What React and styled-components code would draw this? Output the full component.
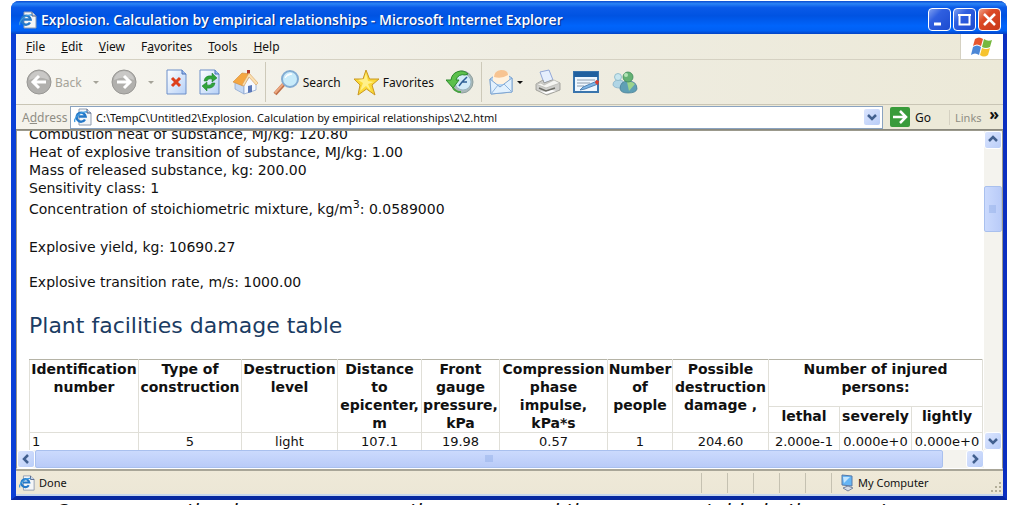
import React from 'react';
import styled, { createGlobalStyle } from 'styled-components';

const GlobalStyle = createGlobalStyle`
	* {
		box-sizing: border-box;
	}

	body {
		margin: 0;
		background: #fff;
		color: #111;
		font-family: "Noto Sans", "Open Sans", sans-serif;
		font-size: 12px;
	}

	button, input {
		font: inherit;
		color: inherit;
	}

	button {
		padding: 0;
		border: 0;
		background: none;
	}
`;

const Page = styled.div`
	display: flex;
	flex-direction: column;
	height: 100vh;
	overflow: hidden;
	padding: 1px 5px 0 11px;
`;

const Window = styled.section`
	display: flex;
	flex-direction: column;
	flex: 1;
	min-height: 0;
	border: solid #0a3fd6;
	border-width: 0 4px 4px 5px;
	border-color: #0a3fd6 #0b2fc0 #0728a0 #0a3fd6;
	border-radius: 8px 8px 0 0;
	background: #ece9d8;
`;

const TitleBar = styled.header`
	display: flex;
	align-items: center;
	flex: none;
	gap: 4px;
	height: 33px;
	margin: 0 -4px 0 -5px;
	padding: 4px 6px 0 8px;
	border-radius: 8px 8px 0 0;
	background: linear-gradient(#0a4bd0, #2a83f5 8%, #0a5ae8 20%, #0053e2 45%, #0064fb 75%, #0060f4 90%, #0443c4);
`;

const Title = styled.h1`
	flex: 1;
	margin: 0;
	overflow: hidden;
	color: #fff;
	font-family: "Open Sans", "Noto Sans", sans-serif;
	font-size: 14px;
	font-weight: 600;
	line-height: 20px;
	text-shadow: 1px 1px 1px #0a2f8c;
	white-space: nowrap;
`;

const WindowButtons = styled.div`
	display: flex;
	gap: 2px;
`;

const WindowButton = styled.button`
	width: 23px;
	height: 23px;
	border: 1px solid #fff;
	border-radius: 4px;
	background: ${({ $close }) => $close
		? 'linear-gradient(135deg, #f0a088, #dc4a25 35%, #c8381a)'
		: 'linear-gradient(135deg, #7f9ff0, #2f5fe0 35%, #1c4bd0)'};

	svg {
		display: block;
	}
`;

const MenuBar = styled.nav`
	display: flex;
	flex: none;
	height: 26px;
	border-bottom: 1px solid #d5d1c2;
	background: linear-gradient(90deg, #f8f7f3, #efede2 50%, #ece9d8);
`;

const MenuItems = styled.div`
	display: flex;
	align-items: center;
	flex: 1;
	gap: 16px;
	padding-left: 10px;
`;

const FlagBox = styled.div`
	display: flex;
	align-items: center;
	justify-content: center;
	width: 43px;
	border-left: 1px solid #d5d1c2;
	background: #fff;
`;

const ToolBar = styled.div`
	display: flex;
	align-items: center;
	flex: none;
	height: 45px;
	padding-left: 10px;
	border-bottom: 1px solid #c9c5b5;
	background: linear-gradient(90deg, #f7f6f1, #efede2 50%, #ece9d8);
`;

const ToolGroup = styled.div`
	display: flex;
	align-items: center;
	gap: 12px;
	height: 40px;
	margin-right: 7px;
	padding-right: 7px;
	border-right: 1px solid ${({ $last }) => $last ? 'transparent' : '#cdc9b9'};
`;

const ToolButton = styled.button`
	display: flex;
	align-items: center;
	gap: 3px;
	color: ${({ disabled }) => disabled ? '#a5a399' : '#111'};

	svg {
		flex: none;
	}
`;

const Caret = styled.span`
	margin-left: ${({ $gap }) => $gap}px;
	border: 3px solid transparent;
	border-top-color: currentColor;
	border-bottom: 0;
`;

const AddressBar = styled.form`
	display: flex;
	align-items: center;
	flex: none;
	height: 25px;
	padding-left: 6px;
	border-bottom: 1px solid #8b897e;
	background: linear-gradient(90deg, #f5f3ec, #ece9d8 50%);
`;

const AddressLabel = styled.label`
	width: 48px;
	color: #8f8d84;
`;

const AddressBox = styled.div`
	display: flex;
	align-items: center;
	flex: 1;
	gap: 4px;
	height: 23px;
	padding: 0 1px 0 3px;
	border: 1px solid #8aa3c0;
	background: #fff;
`;

const AddressInput = styled.input`
	flex: 1;
	min-width: 0;
	padding: 0;
	border: 0;
	outline: 0;
	background: transparent;
	font-size: 11px;
`;

const GoButton = styled.button`
	display: flex;
	align-items: center;
	gap: 5px;
	width: 66px;
	padding-left: 7px;
`;

const Links = styled.div`
	display: flex;
	justify-content: space-between;
	width: 54px;
	padding: 0 4px 0 5px;
	border-left: 1px solid #d5d1c2;
	color: #8f8d84;
	font-size: 11px;

	button {
		align-self: flex-start;
		color: #111;
		font-size: 16px;
		font-weight: 700;
		line-height: 8px;
	}
`;

const Viewport = styled.div`
	display: grid;
	grid-template-columns: 1fr 18px;
	grid-template-rows: 1fr 18px;
	flex: 1;
	min-height: 0;
	border: 1px solid #9b998c;
	border-bottom-color: #fff;
	background: #fff;
`;

const Document = styled.main`
	min-width: 0;
	overflow: hidden;
	padding-left: 12px;
	font-family: Verdana, "DejaVu Sans", sans-serif;
	font-size: 14px;
	line-height: 18px;
`;

const Facts = styled.div`
	margin-top: -6px;

	p {
		margin: 0;
	}

	p:nth-child(5) {
		padding: 3px 0;
	}

	p:nth-child(n + 6) {
		margin-top: 17px;
	}

	sup {
		font-size: 11px;
		line-height: 0;
	}
`;

const Heading = styled.h2`
	margin: 20px 0 18px;
	color: #1b3c63;
	font-size: 22px;
	font-weight: 400;
	line-height: 30px;
`;

const DamageTable = styled.table`
	width: 953px;
	table-layout: fixed;
	border-collapse: collapse;
	border: 1px solid #b5b3a6;
	text-align: center;

	th, td {
		height: 26px;
		padding: 0;
		border: 1px solid #e0dfd8;
		vertical-align: top;
		white-space: nowrap;
	}

	thead tr:first-child th {
		border-top-color: #b5b3a6;
	}

	th {
		white-space: pre-line;
	}

	th[colspan] {
		height: 47px;
	}

	td {
		font-size: 13px;
	}

	td:first-child {
		padding-left: 2px;
		text-align: left;
	}
`;

const ScrollBar = styled.div`
	display: flex;
	flex-direction: ${({ $vertical }) => $vertical ? 'column' : 'row'};
	background: #f4f3ee;
`;

const ScrollButton = styled.button`
	display: flex;
	align-items: center;
	justify-content: center;
	flex: none;
	width: 18px;
	height: 18px;
	border: 1px solid #fff;
	border-radius: 3px;
	background: linear-gradient(135deg, #dbe5fe, #b9cdf8);
`;

const Track = styled.div`
	display: flex;
	flex: 1;
	flex-direction: ${({ $vertical }) => $vertical ? 'column' : 'row'};
	padding: ${({ $vertical }) => $vertical ? '37px 0 0' : '0 23px 0 0'};
`;

const Thumb = styled.div`
	display: flex;
	align-items: center;
	justify-content: center;
	flex: ${({ $vertical }) => $vertical ? '0 0 46px' : '1'};
	border: 1px solid #a9c0ee;
	border-radius: 2px;
	background: ${({ $vertical }) => $vertical
		? 'linear-gradient(90deg, #cbdafd, #b9cbf8)'
		: 'linear-gradient(#cbdafd, #b9cbf8)'};
`;

const StatusBar = styled.footer`
	display: flex;
	align-items: center;
	flex: none;
	height: 27px;
	border-top: 2px solid #a9a698;
	border-bottom: 2px solid #c5d6ee;
	background: linear-gradient(#efe9d8, #ece7d6);
`;

const StatusText = styled.div`
	display: flex;
	align-items: center;
	flex: 1;
	gap: 4px;
	padding-left: 3px;
	font-size: 11px;
`;

const StatusCell = styled.div`
	display: flex;
	align-items: center;
	gap: 4px;
	width: ${({ $wide }) => $wide ? '172px' : '26px'};
	height: 20px;
	padding-left: ${({ $wide }) => $wide ? '8px' : '0'};
	border-left: 1px solid #c5c1b1;
	font-size: 11px;
`;

const Grip = styled.svg`
	align-self: flex-end;
	margin-left: auto;
`;

const Caption = styled.p`
	flex: none;
	height: 5px;
	margin: 0;
	padding-left: 44px;
	overflow: hidden;
	color: #111;
	font-family: Verdana, "DejaVu Sans", sans-serif;
	font-size: 20px;
	font-style: italic;
	line-height: 22px;
	white-space: nowrap;
`;

const menus = [
	['', 'F', 'ile'],
	['', 'E', 'dit'],
	['', 'V', 'iew'],
	['F', 'a', 'vorites'],
	['', 'T', 'ools'],
	['', 'H', 'elp']
];

const columns = [109, 103, 96, 84, 78, 108, 65, 96, 71, 72, 71];

const headers = [
	'Identification\nnumber',
	'Type of\nconstruction',
	'Destruction\nlevel',
	'Distance\nto\nepicenter,\nm',
	'Front\ngauge\npressure,\nkPa',
	'Compression\nphase\nimpulse,\nkPa*s',
	'Number\nof\npeople',
	'Possible\ndestruction\ndamage ,'
];

const row = ['1', '5', 'light', '107.1', '19.98', '0.57', '1', '204.60', '2.000e-1', '0.000e+0', '0.000e+0'];

function PageIcon({ size = 18 }) {
	return (
		<svg width={size} height={size} viewBox="0 0 18 18" aria-hidden="true">
			<path d="M5 1h8l4 4v12H5z" fill="#f4f6f8" stroke="#8f9cb0" />
			<path d="M13 1v4h4" fill="#cfdcf0" stroke="#4a5a80" />
			<path d="M11 11.500a4.500 4.500 0 1 1 .6-3H4.500" fill="none" stroke="#2478c8" strokeWidth="2.400" />
			<path d="M1 14C-1 10 7 3 13 4" fill="none" stroke="#3d9ae0" strokeWidth="1.300" />
		</svg>
	);
}

function ArrowIcon({ flip }) {
	return (
		<svg width="26" height="26" viewBox="0 0 26 26" aria-hidden="true">
			<circle cx="13" cy="13" r="12" fill="#b1b0ad" stroke="#989794" />
			<path d="M3 11a10 9 0 0 1 20 0q-10-5-20 0" fill="#c9c8c6" />
			<path
				d={flip ? 'M6 13h13M13 7l6 6-6 6' : 'M20 13H7M13 7l-6 6 6 6'}
				fill="none"
				stroke="#fff"
				strokeWidth="3"
			/>
		</svg>
	);
}

function SheetIcon({ children }) {
	return (
		<svg width="21" height="26" viewBox="0 0 21 26" aria-hidden="true">
			<defs>
				<linearGradient id="sheet" x2="1" y2="1">
					<stop stopColor="#fff" />
					<stop offset="1" stopColor="#b5d0f7" />
				</linearGradient>
			</defs>
			<path d="M1 1h15l4 4v20H1z" fill="url(#sheet)" stroke="#6d8fc9" />
			<path d="M16 1v4h4" fill="#9dbcf0" stroke="#4a72b8" />
			{children}
		</svg>
	);
}

function HomeIcon() {
	return (
		<svg width="26" height="26" viewBox="0 0 26 26" aria-hidden="true">
			<path d="M15 1h3v7h-3z" fill="#b23a2a" />
			<path d="M3 13l9 4v8l-9-5z" fill="#c5d8f2" stroke="#8fa8d0" strokeWidth=".8" />
			<path d="M12 16l6-9 6 7v7l-12 4z" fill="#f6f9ff" stroke="#8fa8d0" strokeWidth=".8" />
			<path d="M16 17l4-1v7l-4 1z" fill="#5a78b8" />
			<path d="M1 13L10 4l8 1-7 12z" fill="#f5a742" stroke="#d08a38" strokeWidth=".6" />
			<path d="M17 4l9 10-2 2-7-8-5 9-2-1z" fill="#fbe0b0" stroke="#d8a060" strokeWidth=".6" />
		</svg>
	);
}

function SearchIcon() {
	return (
		<svg width="27" height="27" viewBox="0 0 27 27" aria-hidden="true">
			<path d="M2 25l9-10" stroke="#bf6f48" strokeWidth="4" />
			<path d="M2 24l9-10" stroke="#eda880" strokeWidth="2" />
			<circle cx="17" cy="10" r="8" fill="#c8ebfa" stroke="#83acd2" strokeWidth="2" />
			<path d="M12 9q2-5 7-4-5 1-7 4" fill="#fff" stroke="#fff" />
		</svg>
	);
}

function StarIcon() {
	return (
		<svg width="27" height="27" viewBox="0 0 27 27" aria-hidden="true">
			<path d="M13 1l3.500 9H26l-7 6 3 10-8.500-6L5 26l2-10-6-6h9z" fill="#fbd936" stroke="#ca9822" />
			<path d="M13 4l2 8 6 1-6 2 3 7-5-5-6 5 3-8-5-3 6-1z" fill="#fff08a" />
		</svg>
	);
}

function HistoryIcon() {
	return (
		<svg width="28" height="26" viewBox="0 0 28 26" aria-hidden="true">
			<circle cx="16" cy="13" r="11" fill="#a9b8b8" stroke="#8fa09f" />
			<circle cx="17" cy="13" r="8" fill="#d3ebf8" stroke="#9ab5c0" />
			<path d="M13 17l3-4 5-5M16 13h5" fill="none" stroke="#2f6096" strokeWidth="1.500" />
			<path d="M22 5A10 10 0 0 0 5 11H0l7 8 6-8h-3a7 7 0 0 1 9-5z" fill="#5cc04c" stroke="#2b8a2c" />
			<path d="M7 19a10 10 0 0 0 8 4" fill="none" stroke="#46a43e" strokeWidth="2" />
		</svg>
	);
}

function MailIcon() {
	return (
		<svg width="24" height="26" viewBox="0 0 24 26" aria-hidden="true">
			<path d="M1 10l11-8 11 7v14L2 25z" fill="#b5d6f5" stroke="#7fa6d2" />
			<path d="M4 5q9-6 16 0v10H4z" fill="#fff2df" />
			<path d="M5 8q0-6 7-7 7 0 7 5-6 4-14 2" fill="#f7c492" />
			<path d="M1 10l10 8 12-9v14L2 25z" fill="#e2f1fe" stroke="#7fa6d2" />
			<path d="M2 25l7-9M23 23l-8-8" stroke="#8fb5de" />
		</svg>
	);
}

function PrintIcon() {
	return (
		<svg width="26" height="27" viewBox="0 0 26 27" aria-hidden="true">
			<path d="M5 3l9-2 4 10-9 3z" fill="#e6effd" stroke="#93a8d8" />
			<path d="M1 15l7-4 1 3 8-3 8 3v7l-13 5-11-5z" fill="#cfcfcc" stroke="#96968f" strokeWidth=".8" />
			<path d="M1 15l10 4 14-5-6-3-10 5-3-2z" fill="#f5f5f2" stroke="#b5b5af" strokeWidth=".7" />
			<path d="M4 19l7 3 9-3" fill="none" stroke="#6c6c66" strokeWidth="1.500" />
			<path d="M5 22l6 3 10-3-4-1-6 2z" fill="#fff" />
		</svg>
	);
}

function EditIcon() {
	return (
		<svg width="27" height="22" viewBox="0 0 27 22" aria-hidden="true">
			<path d="M1 1h24v20H1z" fill="#eef7ff" stroke="#3a75ad" strokeWidth="2" />
			<path d="M1 1h24v5H1z" fill="#20609f" />
			<path d="M4 9h18M4 12h13M4 15h7" stroke="#8c9cad" />
			<path d="M24 10L10 16l-3 3 5-1 13-5z" fill="#7db5e6" stroke="#3a6fa5" strokeWidth=".8" />
			<path d="M23 9l3 1-1 4-3-2z" fill="#dd3c2c" />
		</svg>
	);
}

function PeopleIcon() {
	return (
		<svg width="26" height="23" viewBox="0 0 26 23" aria-hidden="true">
			<path d="M1 14q0-5 6-5 5 0 6 5 0 3-5 3-6 0-7-3" fill="#b0d5e5" stroke="#85b0c8" strokeWidth=".8" />
			<circle cx="6" cy="6" r="3.500" fill="#c8e6ee" stroke="#85b5c5" strokeWidth=".8" />
			<path d="M8 18q0-8 8-8 9 0 9 8-1 4-9 4-7 0-8-4" fill="#5f9fb5" stroke="#4a8095" strokeWidth=".8" />
			<path d="M15 11l2 9 6-7q-3-3-8-2" fill="#9bd38c" />
			<circle cx="16" cy="6" r="5" fill="#65b274" stroke="#3f8a5a" strokeWidth=".8" />
			<circle cx="14" cy="4" r="2" fill="#b3e3b5" />
		</svg>
	);
}

function FlagIcon() {
	return (
		<svg width="22" height="20" viewBox="0 0 22 20" aria-hidden="true">
			<path d="M4 2q4-3 8 0l-2 7q-4-3-8 0z" fill="#e8562c" />
			<path d="M13 2q4 3 8 1l-2 7q-4 2-8 0z" fill="#76b83e" />
			<path d="M2 10q4-3 8 0l-2 8q-4-3-8 0z" fill="#4c87d6" />
			<path d="M11 11q4 2 8 0l-2 7q-4 3-8 0z" fill="#f6c32f" />
		</svg>
	);
}

function ComputerIcon() {
	return (
		<svg width="14" height="18" viewBox="0 0 14 18" aria-hidden="true">
			<path d="M2 1l10 1v10l-10-1z" fill="#65b5f5" stroke="#5778a7" />
			<path d="M3 3l7 0-6 6z" fill="#c3e5ff" />
			<path d="M3 14l5-2 5 2-5 3z" fill="#d5dce6" stroke="#7886a0" />
		</svg>
	);
}

const chevrons = {
	up: 'M1 6l4-4 4 4',
	down: 'M1 3l4 4 4-4',
	left: 'M7 1L3 5l4 4',
	right: 'M3 1l4 4-4 4'
};

function ScrollArrow({ direction, label }) {
	return (
		<ScrollButton type="button" aria-label={label}>
			<svg width="10" height="10" viewBox="0 0 10 10" aria-hidden="true">
				<path d={chevrons[direction]} fill="none" stroke="#42608f" strokeWidth="2.500" />
			</svg>
		</ScrollButton>
	);
}

function Toolbar() {
	return (
		<ToolBar>
			<ToolGroup>
				<ToolButton disabled><ArrowIcon />Back<Caret $gap={8} /></ToolButton>
				<ToolButton disabled aria-label="Forward"><ArrowIcon flip /><Caret $gap={8} /></ToolButton>
				<ToolButton aria-label="Stop">
					<SheetIcon><path d="M6 9l8 8M14 9l-8 8" stroke="#dd3f1c" strokeWidth="3" /></SheetIcon>
				</ToolButton>
				<ToolButton aria-label="Refresh">
					<SheetIcon>
						<path d="M5 12q1-6 8-5V4l5 5-5 4v-3q-4-1-5 2z" fill="#30a43b" stroke="#167b25" strokeWidth=".5" />
						<path d="M16 14q-1 6-8 5v3l-5-5 5-4v3q4 1 5-2z" fill="#30a43b" stroke="#167b25" strokeWidth=".5" />
					</SheetIcon>
				</ToolButton>
				<ToolButton aria-label="Home"><HomeIcon /></ToolButton>
			</ToolGroup>
			<ToolGroup>
				<ToolButton><SearchIcon />Search</ToolButton>
				<ToolButton><StarIcon />Favorites</ToolButton>
				<ToolButton aria-label="History"><HistoryIcon /></ToolButton>
			</ToolGroup>
			<ToolGroup $last>
				<ToolButton aria-label="Mail"><MailIcon /><Caret $gap={1} /></ToolButton>
				<ToolButton aria-label="Print"><PrintIcon /></ToolButton>
				<ToolButton aria-label="Edit"><EditIcon /></ToolButton>
				<ToolButton aria-label="Messenger"><PeopleIcon /></ToolButton>
			</ToolGroup>
		</ToolBar>
	);
}

function DamageReport() {
	return (
		<Document>
			<Facts>
				<p>Combustion heat of substance, MJ/kg: 120.80</p>
				<p>Heat of explosive transition of substance, MJ/kg: 1.00</p>
				<p>Mass of released substance, kg: 200.00</p>
				<p>Sensitivity class: 1</p>
				<p>Concentration of stoichiometric mixture, kg/m<sup>3</sup>: 0.0589000</p>
				<p>Explosive yield, kg: 10690.27</p>
				<p>Explosive transition rate, m/s: 1000.00</p>
			</Facts>
			<Heading>Plant facilities damage table</Heading>
			<DamageTable>
				<colgroup>
					{columns.map((width, i) => <col key={i} width={width} />)}
				</colgroup>
				<thead>
					<tr>
						{headers.map(text => <th key={text} rowSpan={2}>{text}</th>)}
						<th colSpan={3}>{'Number of injured\npersons:'}</th>
					</tr>
					<tr>
						<th>lethal</th>
						<th>severely</th>
						<th>lightly</th>
					</tr>
				</thead>
				<tbody>
					<tr>
						{row.map((value, i) => <td key={i}>{value}</td>)}
					</tr>
				</tbody>
			</DamageTable>
		</Document>
	);
}

export default function App() {
	return (
		<Page>
			<GlobalStyle />
			<Window>
				<TitleBar>
					<PageIcon />
					<Title>Explosion. Calculation by empirical relationships - Microsoft Internet Explorer</Title>
					<WindowButtons>
						<WindowButton aria-label="Minimize">
							<svg width="21" height="21" aria-hidden="true"><path d="M5 15h7" stroke="#fff" strokeWidth="3" /></svg>
						</WindowButton>
						<WindowButton aria-label="Maximize">
							<svg width="21" height="21" aria-hidden="true">
								<path d="M5.500 6v9.500h10V6M4 6h13" fill="none" stroke="#fff" strokeWidth="2" />
							</svg>
						</WindowButton>
						<WindowButton $close aria-label="Close">
							<svg width="21" height="21" aria-hidden="true">
								<path d="M5 5l11 11M16 5L5 16" stroke="#fff" strokeWidth="2.500" />
							</svg>
						</WindowButton>
					</WindowButtons>
				</TitleBar>
				<MenuBar>
					<MenuItems>
						{menus.map(([before, key, after]) => (
							<button key={key} type="button">{before}<u>{key}</u>{after}</button>
						))}
					</MenuItems>
					<FlagBox><FlagIcon /></FlagBox>
				</MenuBar>
				<Toolbar />
				<AddressBar onSubmit={e => e.preventDefault()}>
					<AddressLabel htmlFor="address">A<u>d</u>dress</AddressLabel>
					<AddressBox>
						<PageIcon />
						<AddressInput
							id="address"
							defaultValue="C:\TempC\Untitled2\Explosion. Calculation by empirical relationships\2\2.html"
						/>
						<ScrollArrow direction="down" label="Show addresses" />
					</AddressBox>
					<GoButton>
						<svg width="20" height="20" viewBox="0 0 20 20" aria-hidden="true">
							<rect width="20" height="20" rx="2" fill="#399b3b" />
							<path d="M3 10h12M10 4l6 6-6 6" fill="none" stroke="#fff" strokeWidth="2.500" />
						</svg>
						Go
					</GoButton>
					<Links>Links<button type="button" aria-label="More links">»</button></Links>
				</AddressBar>
				<Viewport>
					<DamageReport />
					<ScrollBar $vertical>
						<ScrollArrow direction="up" label="Scroll up" />
						<Track $vertical>
							<Thumb $vertical>
								<svg width="8" height="8" aria-hidden="true"><path d="M0 1h7M0 3h7M0 5h7M0 7h7" stroke="#94b0e8" /></svg>
							</Thumb>
						</Track>
						<ScrollArrow direction="down" label="Scroll down" />
					</ScrollBar>
					<ScrollBar>
						<ScrollArrow direction="left" label="Scroll left" />
						<Track>
							<Thumb>
								<svg width="8" height="8" aria-hidden="true"><path d="M1 0v7M3 0v7M5 0v7M7 0v7" stroke="#94b0e8" /></svg>
							</Thumb>
						</Track>
						<ScrollArrow direction="right" label="Scroll right" />
					</ScrollBar>
				</Viewport>
				<StatusBar>
					<StatusText><PageIcon size={16} />Done</StatusText>
					<StatusCell />
					<StatusCell />
					<StatusCell />
					<StatusCell />
					<StatusCell />
					<StatusCell $wide>
						<ComputerIcon />
						My Computer
						<Grip width="12" height="12" aria-hidden="true">
							<path d="M8 2h2M8 6h2M4 6h2M8 10h2M4 10h2M0 10h2" stroke="#b3ae99" strokeWidth="2" />
						</Grip>
					</StatusCell>
				</StatusBar>
			</Window>
			<Caption>One can see the damage zones on the screen and the summary table in the report</Caption>
		</Page>
	);
}
